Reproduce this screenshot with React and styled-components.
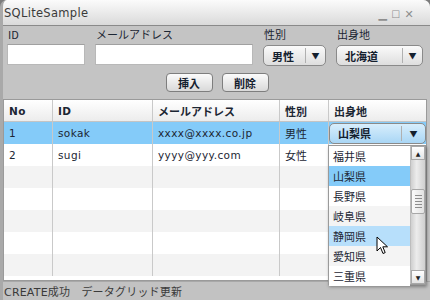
import React from "react";
import styled, { createGlobalStyle } from "styled-components";

const GlobalStyle = createGlobalStyle`
  html, body {
    margin: 0;
    padding: 0;
    background: #7c7c7c;
  }
  * {
    box-sizing: border-box;
  }
`;

const jp = `"DejaVu Sans", "Noto Sans CJK JP", sans-serif`;

const Window = styled.div`
  position: relative;
  width: 430px;
  height: 300px;
  overflow: hidden;
  border-radius: 7px 7px 0 0;
  background: #c4c4c4;
  border-left: 3px solid #a9a9a9;
  display: flex;
  flex-direction: column;
  font-family: ${jp};
  color: #1c2633;
`;

const TitleBar = styled.div`
  height: 26px;
  flex: none;
  display: flex;
  align-items: center;
  justify-content: space-between;
  padding: 0 16px 0 1px;
  background: linear-gradient(#fbfbfb, #dadada);
  border-bottom: 1px solid #8a8a8a;
  font-size: 11.5px;
  color: #3a3a3a;
  letter-spacing: 0.3px;
`;

const Controls = styled.div`
  display: flex;
  gap: 4px;
  align-items: center;
  color: #8e8e8e;
  font-size: 11px;
  padding-top: 4px;
`;

const Form = styled.div`
  display: grid;
  grid-template-columns: 78px 158px 63px 87px;
  column-gap: 10px;
  padding: 0 0 0 4px;
`;

const Label = styled.div`
  height: 18px;
  line-height: 17px;
  font-size: 11px;
  padding-left: 1px;
  font-family: "Noto Sans CJK JP", sans-serif;
`;

const Input = styled.div`
  height: 21px;
  background: #fff;
  border: 1px solid #b8b8b8;
  border-top-color: #a0a0a0;
`;

const Combo = styled.div`
  margin-top: ${(p) => (p.$inCell ? 0 : 1)}px;
  width: ${(p) => (p.$inCell ? "100%" : "auto")};
  height: 21px;
  display: flex;
  align-items: center;
  border: 1px solid #8a8a8a;
  border-radius: 5px;
  background: ${(p) =>
    p.$blue ? "linear-gradient(#d8eefc, #a9d6f5)" : "linear-gradient(#fafafa, #dedede)"};
  font-family: "Noto Sans CJK JP", sans-serif;
  font-weight: 700;
  font-size: 11px;
  color: #14202e;
`;

const ComboText = styled.div`
  flex: 1;
  padding-left: 8px;
`;

const ComboArrow = styled.div`
  width: ${(p) => p.$w || 20}px;
  height: 15px;
  display: flex;
  align-items: center;
  justify-content: center;
  border-left: 1px solid #b0b0b0;
  font-size: 8px;
`;

const ButtonRow = styled.div`
  display: flex;
  justify-content: center;
  gap: 9px;
  margin-top: 7px;
  padding-left: 1px;
`;

const Button = styled.div`
  width: 47px;
  height: 19px;
  display: flex;
  align-items: center;
  justify-content: center;
  border: 1px solid #7e7e7e;
  border-radius: 4px;
  background: linear-gradient(#fbfbfb, #d9d9d9);
  font-family: "Noto Sans CJK JP", sans-serif;
  font-weight: 700;
  font-size: 11px;
  color: #14202e;
`;

const Table = styled.div`
  margin: 7px 3px 0 0;
  height: 182px;
  flex: none;
  background: #fff;
  border: 1px solid #9a9a9a;
  overflow: hidden;
`;

const Row = styled.div`
  display: grid;
  grid-template-columns: 49px 100px 127px 49px 1fr;
  height: 22px;
  background: ${(p) =>
    p.$head
      ? "linear-gradient(#ffffff, #ececec)"
      : p.$selected
      ? "#84cbf9"
      : p.$odd
      ? "#f3f3f3"
      : "#ffffff"};
  border-bottom: ${(p) => (p.$head ? "1px solid #c4c4c4" : "none")};
  font-weight: ${(p) => (p.$head ? 700 : 400)};
`;

const Cell = styled.div`
  border-right: 1px solid #c9c9c9;
  padding-left: ${(p) => p.$pad ?? 5}px;
  display: flex;
  align-items: center;
  font-size: ${(p) => (p.$latin ? 10.5 : 11)}px;
  font-family: ${(p) =>
    p.$latin ? `"DejaVu Sans", sans-serif` : `"Noto Sans CJK JP", sans-serif`};
  letter-spacing: ${(p) => (p.$latin ? "0.4px" : "0")};
  white-space: nowrap;
  overflow: hidden;
  &:last-child {
    border-right: none;
  }
`;

const StatusBar = styled.div`
  flex: 1;
  display: flex;
  align-items: center;
  padding-left: 1px;
  background: #c2c2c2;
  border-top: 1px solid #a8a8a8;
  font-size: 11px;
  color: #3a3a3a;
  font-family: "DejaVu Sans", "Noto Sans CJK JP", sans-serif;
  letter-spacing: 0.2px;
`;

/* dropdown list of the open combo in row 1 */
const Popup = styled.div`
  position: absolute;
  left: 325px;
  top: 145px;
  width: 98px;
  height: 140px;
  display: flex;
  background: #fff;
  border: 1px solid #9a9a9a;
  box-shadow: 1px 2px 3px rgba(0, 0, 0, 0.35);
`;

const List = styled.div`
  flex: 1;
`;

const Item = styled.div`
  height: 20px;
  display: flex;
  align-items: center;
  padding-left: 4px;
  font-family: "Noto Sans CJK JP", sans-serif;
  font-size: 11px;
  background: ${(p) =>
    p.$selected ? "#84cbf9" : p.$hover ? "#b7dffb" : p.$odd ? "#f4f4f4" : "#fff"};
`;

const ScrollBar = styled.div`
  width: 15px;
  display: flex;
  flex-direction: column;
  background: linear-gradient(90deg, #cfcfcf, #ececec 40%, #cfcfcf);
  border-left: 1px solid #bdbdbd;
`;

const ScrollButton = styled.div`
  height: 14px;
  display: flex;
  align-items: center;
  justify-content: center;
  background: linear-gradient(#ffffff, #e4e4e4);
  border: 1px solid #a8a8a8;
  font-size: 6px;
  color: #222;
`;

const Track = styled.div`
  flex: 1;
  padding-top: 29px;
`;

const Thumb = styled.div`
  height: 25px;
  background: linear-gradient(90deg, #fafafa, #e2e2e2);
  border: 1px solid #a8a8a8;
  border-radius: 2px;
  display: flex;
  flex-direction: column;
  align-items: center;
  justify-content: center;
  gap: 2px;
`;

const Grip = styled.div`
  width: 7px;
  height: 1px;
  background: #8d8d8d;
`;

const Cursor = styled.svg`
  position: absolute;
  left: 373px;
  top: 236px;
`;

const rows = [
  { no: "1", id: "sokak", mail: "xxxx@xxxx.co.jp", sex: "男性", selected: true },
  { no: "2", id: "sugi", mail: "yyyy@yyy.com", sex: "女性" },
  {}, {}, {}, {}, {},
];

const prefs = ["福井県", "山梨県", "長野県", "岐阜県", "静岡県", "愛知県", "三重県"];

export default function App() {
  return (
    <>
      <GlobalStyle />
      <Window>
        <TitleBar>
          <span>SQLiteSample</span>
          <Controls>
            <span>▁</span>
            <span style={{ fontSize: 10 }}>☐</span>
            <span style={{ fontWeight: 700 }}>✕</span>
          </Controls>
        </TitleBar>

        <Form>
          <Label>ID</Label>
          <Label>メールアドレス</Label>
          <Label>性別</Label>
          <Label>出身地</Label>
          <Input />
          <Input />
          <Combo>
            <ComboText>男性</ComboText>
            <ComboArrow>▼</ComboArrow>
          </Combo>
          <Combo>
            <ComboText>北海道</ComboText>
            <ComboArrow>▼</ComboArrow>
          </Combo>
        </Form>

        <ButtonRow>
          <Button>挿入</Button>
          <Button>削除</Button>
        </ButtonRow>

        <Table>
          <Row $head>
            <Cell $latin>No</Cell>
            <Cell $latin>ID</Cell>
            <Cell>メールアドレス</Cell>
            <Cell>性別</Cell>
            <Cell>出身地</Cell>
          </Row>
          {rows.map((r, i) => (
            <Row key={i} $selected={r.selected} $odd={i % 2 === 0 && i > 1}>
              <Cell $latin>{r.no}</Cell>
              <Cell $latin>{r.id}</Cell>
              <Cell $latin>{r.mail}</Cell>
              <Cell>{r.sex}</Cell>
              {r.selected ? (
                <Cell $pad={0}>
                  <Combo $blue $inCell>
                    <ComboText>山梨県</ComboText>
                    <ComboArrow $w={24}>▼</ComboArrow>
                  </Combo>
                </Cell>
              ) : (
                <Cell />
              )}
            </Row>
          ))}
        </Table>

        <StatusBar>CREATE成功　データグリッド更新</StatusBar>

        <Popup>
          <List>
            {prefs.map((p, i) => (
              <Item key={p} $selected={i === 1} $hover={i === 4} $odd={i % 2 === 1}>
                {p}
              </Item>
            ))}
          </List>
          <ScrollBar>
            <ScrollButton>▲</ScrollButton>
            <Track>
              <Thumb>
                <Grip />
                <Grip />
                <Grip />
                <Grip />
                <Grip />
              </Thumb>
            </Track>
            <ScrollButton>▼</ScrollButton>
          </ScrollBar>
        </Popup>

        <Cursor width="13" height="20" viewBox="0 0 13 20">
          <path
            d="M1 1 L1 15 L4.5 11.5 L7 17.5 L9.2 16.6 L6.8 10.8 L11.5 10.8 Z"
            fill="#fff"
            stroke="#000"
            strokeWidth="1"
            strokeLinejoin="round"
          />
        </Cursor>
      </Window>
    </>
  );
}
